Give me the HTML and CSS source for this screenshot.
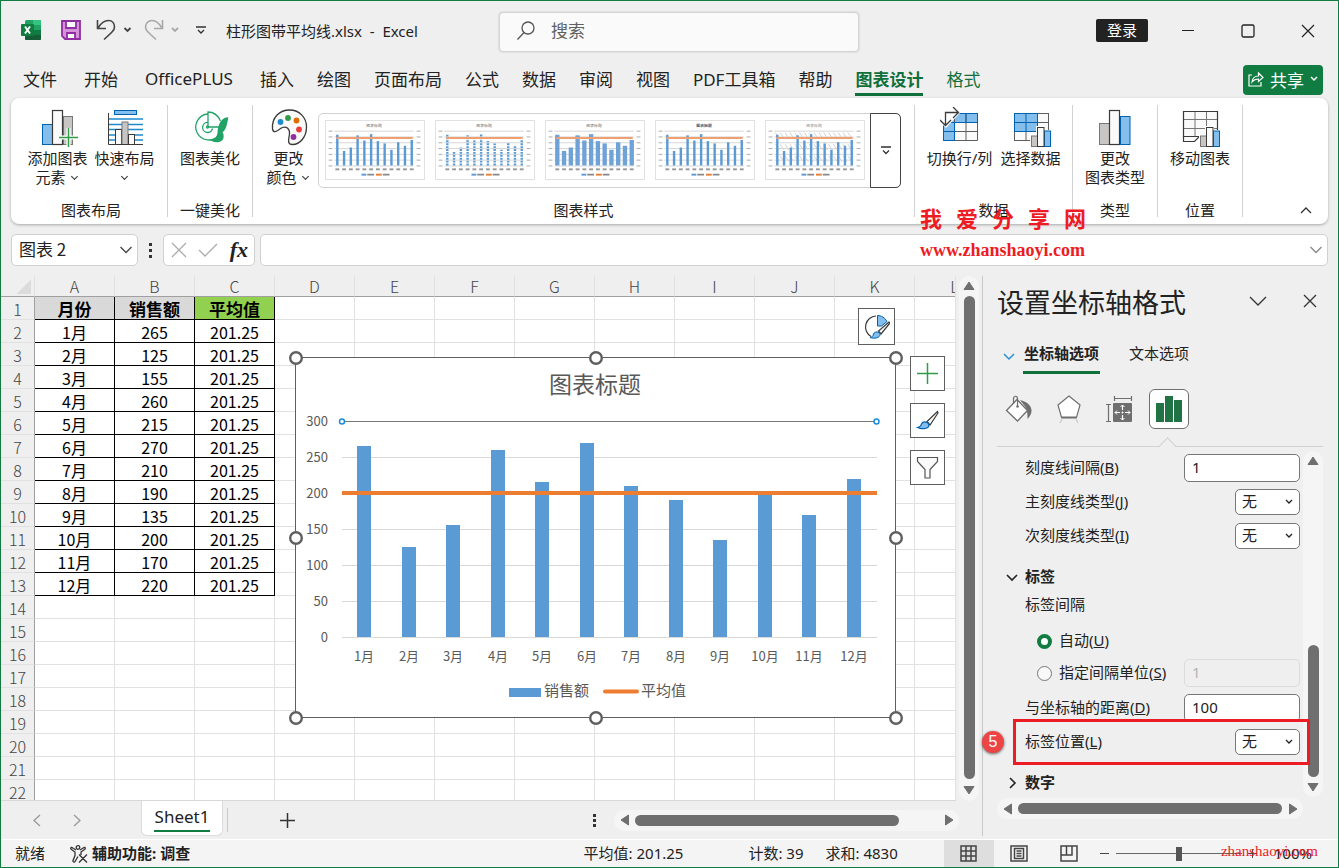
FILE: index.html
```html
<!DOCTYPE html>
<html lang="zh-CN">
<head>
  <meta charset="UTF-8">
  <meta name="viewport" content="width=device-width, initial-scale=1.0">
  <title>柱形图带平均线.xlsx - Excel</title>
  <link rel="stylesheet" href="styles.css">
</head>
<body>
  <div class="window">
    <!-- 标题栏 -->
    <header class="titlebar">
      <div class="title-left">
        <svg class="app-icon" width="20" height="20" viewBox="0 0 20 20">
          <rect x="4" y="0" width="16" height="20" rx="1.5" fill="#21a366"/>
          <rect x="12" y="0" width="8" height="5" fill="#33c481"/>
          <rect x="4" y="5" width="8" height="5" fill="#107c41"/>
          <path d="M4 10h16v9a1 1 0 0 1-1 1H5a1 1 0 0 1-1-1z" fill="#185c37"/>
          <rect x="12" y="10" width="8" height="5" fill="#107c41"/>
          <rect x="0" y="4" width="13" height="12" rx="1" fill="#107c41"/>
          <path d="M4 6.500l5 7M9 6.500l-5 7" stroke="#fff" stroke-width="1.900"/>
        </svg>
        <button class="quick" aria-label="保存">
          <svg width="20" height="20" viewBox="0 0 20 20" fill="#d592d9" stroke="#8f2ea0" stroke-width="1.800">
            <path d="M1 1h18v18H4l-3-3z"/>
            <path d="M5 1v7h10V1z" fill="#fafafa"/>
            <path d="M6 19v-6h8v6z" fill="#fafafa"/>
          </svg>
        </button>
        <button class="quick undo" aria-label="撤消">
          <svg width="36" height="22" viewBox="0 0 36 22" fill="none" stroke="#444" stroke-width="1.600">
            <path d="M1.500 1v8.500h8.500M2 9C5 4 9 1.500 12.500 1.500C16.500 1.500 18.500 4.500 18.500 8C18.500 11 16.500 13 8 20.500"/>
            <path d="M28.500 9l3 3 3-3" stroke-width="1.800"/>
          </svg>
        </button>
        <button class="quick" aria-label="恢复">
          <svg width="36" height="22" viewBox="0 0 36 22" fill="none" stroke="#a8a8a8" stroke-width="1.600">
            <path d="M18.500 1v8.500H10M18 9C15 4 11 1.500 8 1.500C4 1.500 1.500 4.500 1.500 8C1.500 11 3.500 13 12 20.500"/>
            <path d="M28 9l3 3 3-3" stroke-width="1.800"/>
          </svg>
        </button>
        <button class="quick more" aria-label="自定义快速访问工具栏">
          <svg width="10" height="8" viewBox="0 0 10 8" fill="none" stroke="#333" stroke-width="1.400">
            <path d="M0 1h10M2 4l3 3 3-3"/>
          </svg>
        </button>
        <span class="doc-name">柱形图带平均线.xlsx&nbsp; -&nbsp; Excel</span>
      </div>
      <label class="search">
        <svg width="18" height="19" viewBox="0 0 18 19" fill="none" stroke="#555" stroke-width="1.300">
          <circle cx="11" cy="7" r="6"/><path d="M7 11.500L.5 18.500"/>
        </svg>
        <input type="text" placeholder="搜索" aria-label="搜索">
      </label>
      <div class="title-right">
        <button class="login">登录</button>
        <button class="win-btn" aria-label="最小化"><svg width="14" height="14" viewBox="0 0 14 14"><path d="M1 6.500h12" stroke="#222"/></svg></button>
        <button class="win-btn" aria-label="最大化"><svg width="14" height="14" viewBox="0 0 14 14"><rect x="1" y="1" width="12" height="12" rx="1.500" fill="none" stroke="#222" stroke-width="1.300"/></svg></button>
        <button class="win-btn" aria-label="关闭"><svg width="14" height="14" viewBox="0 0 14 14"><path d="M1 1l12 12M13 1L1 13" stroke="#222" stroke-width="1.200"/></svg></button>
      </div>
    </header>

    <!-- 选项卡 -->
    <nav class="tabs">
      <button class="tab file">文件</button>
      <button class="tab">开始</button>
      <button class="tab plus">OfficePLUS</button>
      <button class="tab">插入</button>
      <button class="tab">绘图</button>
      <button class="tab">页面布局</button>
      <button class="tab">公式</button>
      <button class="tab">数据</button>
      <button class="tab">审阅</button>
      <button class="tab">视图</button>
      <button class="tab">PDF工具箱</button>
      <button class="tab">帮助</button>
      <button class="tab active">图表设计</button>
      <button class="tab context">格式</button>
      <button class="share">
        <svg width="16" height="16" viewBox="0 0 16 16" fill="none" stroke="#fff" stroke-width="1.200">
          <path d="M4 4H1v11h12v-4M4 11c.5-4 3-6 6.500-6V2l4.500 4.500-4.500 4V8C8 8 6 8.500 4 11z"/>
        </svg>
        共享
        <svg width="8" height="6" viewBox="0 0 8 6"><path d="M1 1l3 3 3-3" fill="none" stroke="#fff" stroke-width="1.500"/></svg>
      </button>
    </nav>

    <!-- 功能区 -->
    <section class="ribbon">
      <div class="group g-layout">
        <div class="group-body">
          <button class="big">
            <svg width="40" height="40" viewBox="0 0 40 40">
              <rect x="4.500" y="17.500" width="10" height="20" fill="#83beec" stroke="#0063b1"/>
              <rect x="25.500" y="9.500" width="9" height="28" fill="#c8c6c4" stroke="#797775"/>
              <rect x="14.500" y="3.500" width="10" height="34" fill="#fafafa" stroke="#3b3a39" stroke-width="1.200"/>
              <path d="M30.500 21v19M21 30.500h19" stroke="#fff" stroke-width="4"/>
              <path d="M30.500 21v19M21 30.500h19" stroke="#309b48" stroke-width="1.500"/>
            </svg>
            <span>添加图表<br>元素 <i class="caret"></i></span>
          </button>
          <button class="big">
            <svg width="40" height="40" viewBox="0 0 40 40">
              <rect x="9.500" y="3.500" width="22" height="4" fill="#83beec" stroke="#0063b1"/>
              <path d="M4 12h34M4 17.500h34M4 22.500h34M4 28h34M4 33h34" stroke="#1e8bcd" stroke-width="1.500"/>
              <rect x="10.500" y="22.500" width="6" height="15" fill="#fafafa" stroke="#3b3a39"/>
              <rect x="17" y="15" width="6" height="22.500" fill="#c8c6c4" stroke="#797775"/>
              <rect x="23.500" y="27.500" width="6" height="10" fill="#fafafa" stroke="#3b3a39"/>
              <path d="M3.500 6v31.500H38" fill="none" stroke="#3b3a39"/>
            </svg>
            <span>快速布局<br><i class="caret"></i></span>
          </button>
        </div>
        <div class="group-name">图表布局</div>
      </div>
      <div class="group g-small">
        <div class="group-body">
          <button class="big">
            <svg width="40" height="40" viewBox="0 0 40 40" fill="none" stroke="#21a366" stroke-width="1.300">
              <path d="M29 28A13 13 0 1 1 18 7"/>
              <path d="M22.500 21.500A5 5 0 1 1 18 15.500"/>
              <path d="M18 19.500V5c6 0 10 3.500 12.500 9M18 20h12"/>
              <circle cx="17.500" cy="20" r="1"/>
              <path d="M37.500 11C31 12 28.500 18 28 27c3-1 6-3 7-6 1.500-3 2-7 2.500-10zM28 27c-1 4-3.500 6-6 6.500 4 2 9 1.500 10.500-1.500 1-2.500.5-5-1-7z" fill="#21a366"/>
            </svg>
            <span>图表美化</span>
          </button>
        </div>
        <div class="group-name">一键美化</div>
      </div>
      <div class="group g-style">
        <div class="group-body">
          <button class="big">
            <svg width="40" height="40" viewBox="0 0 40 40">
              <path d="M3.500 22C2.500 10 11 3 20.500 3C31 3 37.500 11 37.500 20C37.500 30 31 37.500 23.500 37.500C17.500 37.500 20 31 20.500 27C21 22 17.500 19 13.500 20.500C9 22.500 5 28 3.500 22Z" fill="#fafafa" stroke="#3b3a39" stroke-width="1.300"/>
              <circle cx="11.500" cy="15" r="2.900" fill="#1e8bcd"/>
              <circle cx="19" cy="11" r="2.900" fill="#309b48"/>
              <circle cx="27.500" cy="13.500" r="2.900" fill="#de6c00"/>
              <circle cx="30" cy="22.500" r="2.900" fill="#ed3b3b"/>
              <circle cx="24.500" cy="30" r="2.900" fill="#8f2ea0"/>
            </svg>
            <span>更改<br>颜色 <i class="caret"></i></span>
          </button>
          <div class="gallery">
            <div class="thumbs" id="thumbs"></div>
            <button class="gallery-more" aria-label="其他样式">
              <svg width="10" height="9" viewBox="0 0 10 9" fill="none" stroke="#333" stroke-width="1.300"><path d="M0 1h10M2 4.500l3 3 3-3"/></svg>
            </button>
          </div>
        </div>
        <div class="group-name">图表样式</div>
      </div>
      <div class="group g-data">
        <div class="group-body">
          <button class="big">
            <svg width="40" height="40" viewBox="0 0 40 40">
              <rect x="3.500" y="6.500" width="34" height="27" fill="#fafafa"/>
              <path d="M3.500 6.500h34v9h-23v18h-11z" fill="#83beec"/>
              <path d="M3.500 6.500h34v27h-34zM3.500 15.500h34M3.500 24.500h34M14.500 6.500v27M26 6.500v27" fill="none" stroke="#605e5c"/>
              <path d="M3.500 33.500v-18h34v-9h-34M14.500 15.500v18h-11M3.500 24.500h11M26 6.500v9M37.500 6.500v9" fill="none" stroke="#0063b1"/>
              <path d="M0 0h20v6L6 21 0 15z" fill="#fff"/>
              <path d="M5.500 18V5.500H18M0 13l5.500 5.500L11 13M13 0l5.500 5.500L13 11" fill="none" stroke="#3b3a39" stroke-width="1.300"/>
            </svg>
            <span>切换行/列</span>
          </button>
          <button class="big">
            <svg width="40" height="40" viewBox="0 0 40 40">
              <rect x="3.500" y="6.500" width="34" height="27" fill="#fafafa" stroke="#605e5c"/>
              <rect x="3.500" y="6.500" width="23" height="18" fill="#83beec"/>
              <path d="M3.500 24.500h34M26.500 15.500h11M15 24.500v9" stroke="#605e5c"/>
              <path d="M3.500 6.500h23v18h-23zM3.500 15.500h23M15 6.500v18" fill="none" stroke="#0063b1"/>
              <path d="M19 40V27h6v-8h9v4h6v17z" fill="#fff"/>
              <rect x="20.500" y="29" width="6" height="10.500" fill="#c8c6c4" stroke="#797775"/>
              <rect x="33.500" y="24" width="6" height="15.500" fill="#83beec" stroke="#0063b1"/>
              <rect x="26.500" y="20.500" width="6.500" height="19" fill="#fafafa" stroke="#3b3a39"/>
            </svg>
            <span>选择数据</span>
          </button>
        </div>
        <div class="group-name">数据</div>
        <div class="stamp">
          <div class="stamp-name"><span>我</span><span>爱</span><span>分</span><span>享</span><span>网</span></div>
          <div class="stamp-url">www.zhanshaoyi.com</div>
        </div>
      </div>
      <div class="group g-small">
        <div class="group-body">
          <button class="big">
            <svg width="40" height="40" viewBox="0 0 40 40">
              <rect x="4.500" y="16.500" width="10" height="21" fill="#c8c6c4" stroke="#797775"/>
              <rect x="25.500" y="9.500" width="9.500" height="28" fill="#83beec" stroke="#0063b1"/>
              <rect x="14.500" y="3.500" width="10" height="34" fill="#fafafa" stroke="#3b3a39" stroke-width="1.200"/>
            </svg>
            <span>更改<br>图表类型</span>
          </button>
        </div>
        <div class="group-name">类型</div>
      </div>
      <div class="group g-small">
        <div class="group-body">
          <button class="big">
            <svg width="40" height="40" viewBox="0 0 40 40">
              <rect x="3.500" y="4.500" width="34" height="25" fill="#fafafa"/>
              <path d="M3.500 12.500h34M3.500 21.500h34M15 4.500v25M26.500 4.500v25" stroke="#797775"/>
              <path d="M3.500 4.500h34v25h-34z" fill="none" stroke="#3b3a39" stroke-width="1.200"/>
              <path d="M3.500 29.500v5h11l5-5z" fill="#fafafa" stroke="#3b3a39" stroke-width="1.200"/>
              <path d="M19 40V27h6v-8h9v4h6v17z" fill="#fff"/>
              <rect x="20.500" y="29" width="6" height="10.500" fill="#c8c6c4" stroke="#797775"/>
              <rect x="33.500" y="24" width="6" height="15.500" fill="#83beec" stroke="#0063b1"/>
              <rect x="26.500" y="20.500" width="6.500" height="19" fill="#fafafa" stroke="#3b3a39"/>
            </svg>
            <span>移动图表</span>
          </button>
        </div>
        <div class="group-name">位置</div>
      </div>
      <button class="collapse" aria-label="折叠功能区">
        <svg width="12" height="8" viewBox="0 0 12 8"><path d="M1 7l5-5 5 5" fill="none" stroke="#333" stroke-width="1.300"/></svg>
      </button>
    </section>

    <!-- 编辑栏 -->
    <section class="formula">
      <label class="name-box">
        <input type="text" value="图表 2" aria-label="名称框">
        <svg width="14" height="8" viewBox="0 0 14 8"><path d="M1.500 1l5.500 5.500L12.500 1" fill="none" stroke="#444" stroke-width="1.300"/></svg>
      </label>
      <span class="dots"><i></i><i></i><i></i></span>
      <div class="fx-box">
        <button aria-label="取消"><svg width="16" height="16" viewBox="0 0 16 16"><path d="M1 1l14 14M15 1L1 15" stroke="#aaa" stroke-width="1.300"/></svg></button>
        <button aria-label="输入"><svg width="20" height="16" viewBox="0 0 20 16"><path d="M1 8l6 6L19 2" fill="none" stroke="#aaa" stroke-width="1.300"/></svg></button>
        <button class="fx" aria-label="插入函数">fx</button>
      </div>
      <label class="formula-box">
        <input type="text" aria-label="编辑栏">
        <svg width="14" height="8" viewBox="0 0 14 8"><path d="M1.500 1l5.500 5.500L12.500 1" fill="none" stroke="#888" stroke-width="1.300"/></svg>
      </label>
    </section>

    <main class="main">
      <div class="book">
        <div class="sheet-area">
          <div class="sheet">
            <table class="grid" id="grid"></table>
            <svg class="chart" id="chart" width="616" height="376" viewBox="288 350 616 376"></svg>
            <button class="chart-tool float" aria-label="图表美化">
              <svg width="26" height="26" viewBox="0 0 26 26">
                <path d="M12 2A11 11 0 0 0 7 22.500" fill="none" stroke="#3b3a39" stroke-width="1.200"/>
                <path d="M13.500 1.500v10.500h4L23 7.500C21 4 17.500 1.500 13.500 1.500z" fill="#83beec" stroke="#0063b1"/>
                <path d="M25 8L14.500 17l2.500 3L26 9z" fill="#fafafa" stroke="#3b3a39" stroke-width="1.200"/>
                <path d="M6 23.500c2-.5 3-1 3.500-3.500 1-3 6-2.500 6.500.5 0 3.500-6 4.500-10 3z" fill="#83beec" stroke="#0063b1"/>
              </svg>
            </button>
            <div class="chart-tools">
              <button class="chart-tool" aria-label="图表元素"><svg width="23" height="23" viewBox="0 0 23 23"><path d="M11.500 1v21M1 11.500h21" stroke="#309b48" stroke-width="1.500"/></svg></button>
              <button class="chart-tool" aria-label="图表样式">
                <svg width="23" height="23" viewBox="0 0 23 23">
                  <path d="M21.500 2.500L11 12.500l3 3.500 8-12z" fill="#fafafa" stroke="#3b3a39" stroke-width="1.200"/>
                  <path d="M1.500 18.500c2.500-.5 3.500-1 4-3.500 1.500-3.500 7-2 7.500 1 0 4-7 4.500-11.500 2.500z" fill="#83beec" stroke="#0063b1" stroke-width="1.200"/>
                </svg>
              </button>
              <button class="chart-tool" aria-label="图表筛选器"><svg width="23" height="23" viewBox="0 0 23 23"><path d="M1.500 1.500h20v4l-7.500 8v8.500H9v-8.500l-7.500-8z" fill="#fafafa" stroke="#555" stroke-width="1.200"/></svg></button>
            </div>
          </div>
          <div class="vscroll">
            <button aria-label="向上"><svg width="12" height="10" viewBox="0 0 12 10"><path d="M6 1l5 7.500H1z" fill="#6f6f6f" stroke="#6f6f6f" stroke-linejoin="round"/></svg></button>
            <div class="thumb"></div>
            <button aria-label="向下"><svg width="12" height="10" viewBox="0 0 12 10"><path d="M6 9l5-7.500H1z" fill="#6f6f6f" stroke="#6f6f6f" stroke-linejoin="round"/></svg></button>
          </div>
        </div>
        <div class="sheet-bar">
          <button class="nav-btn" aria-label="上一张"><svg width="8" height="13" viewBox="0 0 8 13"><path d="M7 1L1 6.500 7 12" fill="none" stroke="#999" stroke-width="1.300"/></svg></button>
          <button class="nav-btn" aria-label="下一张"><svg width="8" height="13" viewBox="0 0 8 13"><path d="M1 1l6 5.500L1 12" fill="none" stroke="#999" stroke-width="1.300"/></svg></button>
          <button class="sheet-tab"><span>Sheet1</span></button>
          <i class="sep"></i>
          <button class="add" aria-label="新工作表"><svg width="15" height="15" viewBox="0 0 15 15"><path d="M7.500 0v15M0 7.500h15" stroke="#333" stroke-width="1.500"/></svg></button>
          <span class="dots"><i></i><i></i><i></i></span>
          <div class="hscroll">
            <button aria-label="向左"><svg width="10" height="12" viewBox="0 0 10 12"><path d="M1 6l7.500-5v10z" fill="#6f6f6f" stroke="#6f6f6f" stroke-linejoin="round"/></svg></button>
            <div class="track"><div class="thumb short"></div></div>
            <button aria-label="向右"><svg width="10" height="12" viewBox="0 0 10 12"><path d="M9 6L1.500 1v10z" fill="#6f6f6f" stroke="#6f6f6f" stroke-linejoin="round"/></svg></button>
          </div>
        </div>
      </div>

      <!-- 设置坐标轴格式 -->
      <aside class="pane">
        <div class="pane-head">
          <h1>设置坐标轴格式</h1>
          <button aria-label="任务窗格选项"><svg width="18" height="10" viewBox="0 0 18 10"><path d="M1 1l8 8 8-8" fill="none" stroke="#333" stroke-width="1.300"/></svg></button>
          <button aria-label="关闭窗格"><svg width="14" height="14" viewBox="0 0 14 14"><path d="M1 1l12 12M13 1L1 13" stroke="#333" stroke-width="1.300"/></svg></button>
        </div>
        <div class="pane-tabs">
          <svg width="12" height="8" viewBox="0 0 12 8"><path d="M1 1l5 5 5-5" fill="none" stroke="#2b8fd6" stroke-width="1.500"/></svg>
          <button class="pane-tab active">坐标轴选项</button>
          <button class="pane-tab">文本选项</button>
        </div>
        <div class="pane-icons">
          <button aria-label="填充与线条">
            <svg width="28" height="28" viewBox="0 0 28 28">
              <path d="M15 5c7 1.500 12 6 11.500 11 0 3-1.500 5-4 8 0-4 0-8-2-12z" fill="#6f6f6f"/>
              <path d="M12 4.500l10.500 11L12.500 26 1.500 15.500z" fill="#fff" stroke="#6f6f6f" stroke-width="1.300"/>
              <path d="M8.500 9V3.500c0-3 4-3 4 0V11" fill="none" stroke="#6f6f6f" stroke-width="1.200"/>
              <circle cx="12.500" cy="11.500" r="1.300" fill="#6f6f6f"/>
            </svg>
          </button>
          <button aria-label="效果">
            <svg width="28" height="28" viewBox="0 0 28 28">
              <path d="M14 1l11 9-3.500 12.500h-15L3 10z" fill="#fff" stroke="#6f6f6f" stroke-width="1.200"/>
              <path d="M6.500 22.500h15" stroke="#6f6f6f" stroke-width="2"/>
              <path d="M7 24l-2 4M21 24l2 4" stroke="#c8c8c8" stroke-width="1.200"/>
            </svg>
          </button>
          <button aria-label="大小与属性">
            <svg width="28" height="28" viewBox="0 0 28 28">
              <rect x="8" y="8" width="19" height="19" rx="1" fill="#6f6f6f"/>
              <path d="M9.500 3.500h17M9.500 1v5M26.500 1v5M3.500 9.500v17M1 9.500h5M1 26.500h5" stroke="#6f6f6f" stroke-width="1.200"/>
              <path d="M17.500 10v5M17.500 20v5M10 17.500h5M20 17.500h5" stroke="#fff" stroke-width="1.200"/>
              <path d="M15.500 12l2-2 2 2M15.500 23l2 2 2-2M12 15.500l-2 2 2 2M23 15.500l2 2-2 2M17.500 16.500v2M16.500 17.500h2" fill="none" stroke="#fff"/>
            </svg>
          </button>
          <button class="active" aria-label="坐标轴选项">
            <svg width="28" height="28" viewBox="0 0 28 28" fill="#217346"><path d="M1 8h8v19H1zM10 1h8v26h-8zM19 5h8v22h-8z"/></svg>
          </button>
        </div>
        <div class="pane-line"></div>
        <div class="pane-body">
          <form class="form">
            <div class="row"><label for="tickGap">刻度线间隔(<u>B</u>)</label><input type="text" id="tickGap" value="1"></div>
            <div class="row"><label for="majorType">主刻度线类型(<u>J</u>)</label><select id="majorType"><option>无</option></select></div>
            <div class="row"><label for="minorType">次刻度线类型(<u>I</u>)</label><select id="minorType"><option>无</option></select></div>
            <h2 class="section">
              <svg width="14" height="14" viewBox="0 0 14 14"><path d="M2 5l5 5 5-5" fill="none" stroke="#222" stroke-width="1.600"/></svg><span>标签</span>
            </h2>
            <div class="row caption"><span>标签间隔</span></div>
            <div class="row option first"><input type="radio" name="gap" id="gapAuto" checked><label for="gapAuto">自动(<u>U</u>)</label></div>
            <div class="row option"><input type="radio" name="gap" id="gapUnit"><label for="gapUnit">指定间隔单位(<u>S</u>)</label><input type="text" value="1" aria-label="间隔单位" disabled></div>
            <div class="row"><label for="distance">与坐标轴的距离(<u>D</u>)</label><input type="text" id="distance" value="100"></div>
            <div class="row marked"><label for="labelPos">标签位置(<u>L</u>)</label><select id="labelPos"><option>无</option></select><i class="step">5</i></div>
            <h2 class="section">
              <svg width="14" height="14" viewBox="0 0 14 14"><path d="M5 2l5 5-5 5" fill="none" stroke="#222" stroke-width="1.600"/></svg><span>数字</span>
            </h2>
          </form>
          <div class="vscroll">
            <button aria-label="向上"><svg width="12" height="10" viewBox="0 0 12 10"><path d="M6 1l5 7.500H1z" fill="#6f6f6f" stroke="#6f6f6f" stroke-linejoin="round"/></svg></button>
            <div class="track"><div class="thumb"></div></div>
            <button aria-label="向下"><svg width="12" height="10" viewBox="0 0 12 10"><path d="M6 9l5-7.500H1z" fill="#6f6f6f" stroke="#6f6f6f" stroke-linejoin="round"/></svg></button>
          </div>
        </div>
        <div class="hscroll">
          <button aria-label="向左"><svg width="10" height="12" viewBox="0 0 10 12"><path d="M1 6l7.500-5v10z" fill="#6f6f6f" stroke="#6f6f6f" stroke-linejoin="round"/></svg></button>
          <div class="track"><div class="thumb"></div></div>
          <button aria-label="向右"><svg width="10" height="12" viewBox="0 0 10 12"><path d="M9 6L1.500 1v10z" fill="#6f6f6f" stroke="#6f6f6f" stroke-linejoin="round"/></svg></button>
        </div>
      </aside>
    </main>

    <!-- 状态栏 -->
    <footer class="status">
      <span class="ready">就绪</span>
      <svg width="18" height="18" viewBox="0 0 18 18" fill="none" stroke="#333" stroke-width="1.300">
        <circle cx="8" cy="2.500" r="1.800"/>
        <path d="M6 5L2 2.500C1 2 0 3.500 1.500 4.500L5 7v3.500L3 15.500c-.5 1.500 1.500 2 2 1L8 11.500M10 5l4-2.500c1-.5 2 1 .5 2L11 7v3M9 9.500l8 8M17 9.500l-8 8"/>
      </svg>
      <b class="access">辅助功能: 调查</b>
      <span class="avg">平均值: 201.25</span>
      <span class="count">计数: 39</span>
      <span class="sum">求和: 4830</span>
      <button class="view active" aria-label="普通"><svg width="17" height="17" viewBox="0 0 17 17" fill="none" stroke="#444" stroke-width="1.500"><path d="M1 1h15v15H1zM1 6h15M1 11h15M6 1v15M11 1v15"/></svg></button>
      <button class="view" aria-label="页面布局"><svg width="18" height="17" viewBox="0 0 18 17" fill="none" stroke="#444" stroke-width="1.500"><path d="M1 1h16v15H1zM4.500 3.500h9v10h-9zM6.500 6h5M6.500 8.500h5M6.500 11h5"/></svg></button>
      <button class="view" aria-label="分页预览"><svg width="18" height="17" viewBox="0 0 18 17" fill="none" stroke="#444" stroke-width="1.500"><path d="M1 1h16v15H1zM1 10h11V1M6.500 1v9"/></svg></button>
      <button class="zoom-btn" aria-label="缩小"><svg width="11" height="11" viewBox="0 0 11 11"><path d="M1 5.500h9" stroke="#444"/></svg></button>
      <input class="zoom" type="range" min="0" max="100" value="50" aria-label="缩放">
      <button class="zoom-btn" aria-label="放大"><svg width="11" height="11" viewBox="0 0 11 11"><path d="M1 5.500h9M5.500 1v9" stroke="#444"/></svg></button>
      <span class="percent">100%<span class="site">zhanshaoyi.com</span></span>
    </footer>
  </div>
  <script src="script.js"></script>
</body>
</html>
```
FILE: styles.css
```css
* {
  box-sizing: border-box;
}
body {
  margin: 0;
  font-family: "Noto Sans", "Noto Sans CJK SC", sans-serif;
  font-size: 15px;
  color: #222;
}
button, input, select {
  font: inherit;
  color: inherit;
}
button {
  display: flex;
  align-items: center;
  justify-content: center;
  padding: 0;
  border: none;
  background: none;
  white-space: nowrap;
}
input {
  min-width: 0;
  outline: none;
}
svg {
  flex: none;
}
.window {
  display: flex;
  flex-direction: column;
  height: 100vh;
  border: 1px solid #107c41;
  background: #efefef;
  overflow: hidden;
}

/* 标题栏 */
.titlebar {
  display: grid;
  grid-template-columns: 498px minmax(200px, 360px) 1fr;
  align-items: center;
  height: 61px;
  flex: none;
}
.title-left {
  display: flex;
  align-items: center;
  padding: 0 0 3px 20px;
}
.quick {
  margin-left: 20px;
}
.quick + .quick {
  margin-left: 12px;
}
.quick.undo {
  margin-left: 15px;
}
.quick.more {
  margin-left: 16px;
}
.doc-name {
  margin-left: 20px;
}
.search {
  display: flex;
  align-items: center;
  height: 40px;
  padding: 0 17px 2px;
  gap: 14px;
  border: 1px solid #d4d4d4;
  border-radius: 4px;
  background: #fafafa;
  box-shadow: 0 0 2px rgba(0, 0, 0, 0.2);
}
.search input {
  flex: 1;
  padding: 0 2px;
  border: none;
  background: none;
  font-size: 17px;
}
.search input::placeholder {
  color: #616161;
}
.title-right {
  display: flex;
  align-items: center;
  justify-content: flex-end;
  padding-bottom: 2px;
}
.login {
  width: 52px;
  height: 23px;
  margin-right: 10px;
  padding-bottom: 2px;
  border-radius: 2px;
  background: #222;
  color: #fff;
}
.win-btn {
  width: 60px;
  height: 40px;
}

/* 选项卡 */
.tabs {
  display: flex;
  gap: 23px;
  height: 36px;
  flex: none;
  padding: 0 15px 0 22px;
  font-size: 17px;
}
.tab {
  height: 34px;
  border-bottom: 3px solid transparent;
  border-top: 2px solid transparent;
}
.tab.file {
  padding-right: 4px;
}
.tab.plus {
  padding: 0 4px;
}
.tab.active {
  color: #0f703b;
  font-weight: bold;
  border-bottom-color: #0f703b;
}
.tab.context {
  color: #0f703b;
}
.share {
  gap: 6px;
  height: 30px;
  width: 80px;
  margin: 3px 0 0 auto;
  padding-bottom: 2px;
  border-radius: 4px;
  background: #107c41;
  color: #fff;
}

/* 功能区 */
.ribbon {
  display: flex;
  height: 126px;
  flex: none;
  margin: 0 10px;
  padding: 7px 0;
  border-radius: 8px;
  background: #fff;
  box-shadow: 0 1px 3px rgba(0, 0, 0, 0.3);
}
.group {
  position: relative;
  display: flex;
  flex-direction: column;
  justify-content: space-between;
  border-right: 1px solid #d1d1d1;
}
.group-body {
  display: flex;
  justify-content: center;
}
.group-name {
  line-height: 14px;
  text-align: center;
}
.g-layout {
  width: 157px;
  padding-left: 4px;
}
.g-small {
  width: 85px;
}
.g-style {
  flex: 0 1 662px;
}
.g-data {
  width: 158px;
}
.big {
  flex-direction: column;
  justify-content: flex-start;
  gap: 2px;
  min-width: 67px;
  padding-top: 2px;
  line-height: 19px;
}
.g-data .big {
  min-width: 71px;
}
.g-data .group-body {
  padding-left: 3px;
}
.g-style .group-body {
  justify-content: flex-start;
  padding-left: 2px;
}
.caret {
  display: inline-block;
  width: 5px;
  height: 5px;
  margin: 0 2px 4px 3px;
  border-right: 1px solid #333;
  border-bottom: 1px solid #333;
  transform: rotate(45deg);
}
.gallery {
  display: flex;
  height: 75px;
  margin: 8px 13px 0 -4px;
  border: 1px solid #d1d1d1;
  border-radius: 5px;
}
.thumbs {
  display: flex;
  gap: 10px;
  padding: 6px;
}
.thumbs svg {
  border: 1px solid #e1e1e1;
}
.gallery-more {
  width: 31px;
  margin: -1px;
  border: 1px solid #444;
  border-radius: 0 5px 5px 0;
}
.collapse {
  margin: auto 12px 0 auto;
  width: 20px;
  height: 14px;
}
.stamp {
  position: absolute;
  left: 5px;
  top: 103px;
  z-index: 2;
  color: #ed1c24;
  font-weight: bold;
}
.stamp-name {
  display: flex;
  gap: 14px;
  font-size: 22px;
  line-height: 20px;
}
.stamp-url {
  margin-top: 12px;
  font-family: "Liberation Serif", serif;
  font-size: 18px;
  line-height: 20px;
}

/* 编辑栏 */
.formula {
  display: flex;
  align-items: center;
  height: 32px;
  flex: none;
  margin: 10px;
}
.name-box, .fx-box, .formula-box {
  display: flex;
  align-items: center;
  height: 32px;
  border: 1px solid #d1d1d1;
  border-radius: 5px;
  background: #fff;
}
.name-box {
  width: 127px;
  padding: 0 4px 0 7px;
  font-family: "Noto Sans CJK SC", sans-serif;
  font-size: 17px;
}
.name-box input, .formula-box input {
  flex: 1;
  width: 0;
  padding: 0 0 3px;
  border: none;
  background: none;
}
.dots {
  display: flex;
  flex-direction: column;
  gap: 3px;
}
.dots i {
  width: 3px;
  height: 3px;
  background: #333;
}
.formula .dots {
  margin: 0 11px;
}
.fx-box {
  width: 92px;
  justify-content: space-between;
  padding: 0 6px 0 7px;
  margin-right: 5px;
}
.fx {
  font-family: "Liberation Serif", serif;
  font-style: italic;
  font-weight: bold;
  font-size: 22px;
}
.formula-box {
  flex: 1;
  padding: 0 4px;
}

/* 工作表 */
.main {
  display: flex;
  flex: 1;
  min-height: 0;
}
.book {
  display: flex;
  flex-direction: column;
  flex: 1;
  min-width: 0;
}
.sheet-area {
  display: flex;
  flex: 1;
  min-height: 0;
}
.sheet {
  position: relative;
  flex: 1;
  overflow: hidden;
  border-right: 1px solid #e1e1e1;
  border-bottom: 1px solid #d8d8d8;
}
.grid {
  width: 994px;
  table-layout: fixed;
  border-collapse: separate;
  border-spacing: 0;
  background: #fff;
  font-family: "Noto Sans CJK SC", sans-serif;
  font-size: 16px;
  color: #000;
}
.grid th, .grid td {
  height: 23px;
  padding: 1px 0 0;
  border-right: 1px solid #e1e1e1;
  border-bottom: 1px solid #e1e1e1;
  text-align: center;
  line-height: 20px;
}
.grid thead th {
  height: 21px;
  padding: 0;
  background: #efefef;
  border-bottom-color: #a0a0a0;
  color: #444;
  font-weight: 300;
}
.grid tbody th {
  background: #efefef;
  border-right-color: #a0a0a0;
  color: #444;
  font-weight: 300;
}
.grid thead .corner {
  width: 34px;
  background: #efefef linear-gradient(135deg, #efefef 50%, #dcdcdc 50%) no-repeat 15px 3px / 15px 15px;
}
.grid td.filled {
  border-color: #000;
}
.grid td.name {
  background: #d9d9d9;
  font-size: 17px;
  font-weight: bold;
}
.grid td.name.green {
  background: #92d050;
}
.chart {
  position: absolute;
  left: 287px;
  top: 74px;
  font-family: "Noto Sans CJK SC", sans-serif;
  font-size: 13px;
}
.chart-tools {
  position: absolute;
  left: 909px;
  top: 80px;
  display: flex;
  flex-direction: column;
  gap: 12px;
}
.chart-tool {
  width: 35px;
  height: 35px;
  border: 1px solid #5f5f5f;
  background: #fff;
}
.chart-tool.float {
  position: absolute;
  left: 857px;
  top: 32px;
  width: 37px;
  height: 37px;
}

/* 滚动条 */
.vscroll, .hscroll {
  display: flex;
  align-items: center;
  border-radius: 10px;
  background: #f5f5f5;
}
.vscroll {
  flex-direction: column;
  width: 20px;
}
.sheet-area .vscroll {
  margin: 0 3px;
}
.vscroll button {
  width: 20px;
  height: 20px;
}
.sheet-area .vscroll button:last-child {
  height: 22px;
}
.hscroll {
  height: 21px;
}
.hscroll button {
  width: 21px;
  height: 21px;
}
.thumb {
  flex: 1;
  border-radius: 6px;
  background: #6f6f6f;
}
.vscroll .thumb {
  width: 11px;
}
.hscroll .thumb {
  height: 11px;
}
.track {
  display: flex;
  flex: 1;
}
.vscroll .track {
  align-items: flex-end;
}
.vscroll .track .thumb {
  height: 43%;
}
.hscroll .thumb.short {
  flex: 0 0 87%;
}

/* 工作表标签 */
.sheet-bar {
  display: flex;
  align-items: center;
  height: 38px;
  flex: none;
  padding-left: 16px;
}
.nav-btn {
  width: 40px;
  height: 30px;
}
.sheet-tab {
  width: 82px;
  height: 36px;
  margin: 0 4px 4px 44px;
  border: 1px solid #dcdcdc;
  border-top: none;
  border-radius: 0 0 6px 6px;
  background: #fff;
  font-size: 17px;
}
.sheet-tab span {
  padding: 0 1px;
  line-height: 26px;
  border-bottom: 2px solid #107c41;
}
.sep {
  width: 1px;
  height: 24px;
  background: #c8c8c8;
}
.add {
  width: 38px;
  height: 30px;
  margin-left: 40px;
}
.sheet-bar .dots {
  margin: 0 18px 0 auto;
  gap: 2px;
}
.sheet-bar .hscroll {
  width: 345px;
  margin-right: 23px;
}

/* 任务窗格 */
.pane {
  display: flex;
  flex-direction: column;
  flex: none;
  width: 356px;
  padding: 9px 15px 0 14px;
  margin-bottom: 3px;
  border-left: 1px solid #c8c8c8;
}
.pane-head {
  display: flex;
  gap: 32px;
  height: 36px;
  padding-right: 3px;
}
.pane-head h1 {
  flex: 1;
  margin: 0;
  font-size: 27px;
  font-weight: 400;
  line-height: 36px;
  white-space: nowrap;
}
.pane-head button {
  width: 20px;
  height: 32px;
}
.pane-tabs {
  display: flex;
  align-items: center;
  height: 34px;
  margin-top: 19px;
  padding-left: 6px;
}
.pane-tab {
  height: 34px;
  margin-left: 28px;
  padding: 0 1px 10px;
}
.pane-tab.active {
  margin-left: 8px;
  padding-bottom: 7px;
  border-bottom: 3px solid #0f703b;
  font-weight: bold;
}
.pane-icons {
  display: flex;
  gap: 10px;
  margin-top: 15px;
  padding-left: 2px;
}
.pane-icons button {
  width: 40px;
  height: 40px;
}
.pane-icons .active {
  border: 1px solid #6f6f6f;
  border-radius: 6px;
  background: #fff;
}
.pane-line {
  position: relative;
  height: 1px;
  margin-top: 17px;
  background: #d1d1d1;
}
.pane-line::after {
  content: "";
  position: absolute;
  left: 164px;
  top: -6px;
  width: 12px;
  height: 12px;
  border: 1px solid #d1d1d1;
  border-right: none;
  border-bottom: none;
  background: linear-gradient(135deg, #efefef 55%, transparent 55%);
  transform: rotate(45deg);
}
.pane-body {
  display: flex;
  margin-top: 4px;
}
.pane-body .vscroll {
  height: 346px;
}
.form {
  flex: 1;
  padding-right: 3px;
}
.row {
  display: flex;
  align-items: center;
  justify-content: space-between;
  height: 34px;
  padding-left: 28px;
}
.row label, .row > span, .section span {
  padding-bottom: 3px;
}
.row input[type="text"] {
  width: 116px;
  height: 28px;
  padding: 0 7px 2px;
  border: 1px solid #777;
  border-radius: 5px;
  background: #fff;
}
.row input[type="text"]:disabled {
  border-color: #dcdcdc;
  background: none;
  color: #b5b5b5;
}
.row select {
  appearance: none;
  width: 65px;
  height: 26px;
  padding: 0 6px 2px;
  border: 1px solid #777;
  border-radius: 5px;
  background: #fff url("data:image/svg+xml,%3Csvg xmlns='http://www.w3.org/2000/svg' width='8' height='6'%3E%3Cpath d='M1 1l3 3 3-3' fill='none' stroke='%23222' stroke-width='1.300'/%3E%3C/svg%3E") no-repeat right 6px center;
}
.section {
  display: flex;
  align-items: center;
  gap: 6px;
  height: 32px;
  margin: 8px 0 0;
  padding-left: 8px;
  font-size: 15px;
  font-weight: bold;
}
.row.caption {
  height: 24px;
}
.row.option {
  height: 32px;
  padding-left: 40px;
  justify-content: flex-start;
  gap: 7px;
}
.row.option.first {
  margin-top: 8px;
}
.row.option input[type="text"] {
  margin-left: auto;
}
.row.option + .row:not(.option) {
  margin-top: 2px;
}
.row input[type="radio"] {
  appearance: none;
  width: 15px;
  height: 15px;
  margin: 0;
  border: 1px solid #777;
  border-radius: 50%;
  background: #f8f8f8;
}
.row input[type="radio"]:checked {
  border: 4px solid #107c41;
  background: #fff;
}
.row.marked {
  position: relative;
}
.row.marked::after {
  content: "";
  position: absolute;
  inset: -6px -10px -6px 16px;
  border: 3px solid #ed1c24;
  pointer-events: none;
  z-index: 1;
}
.step {
  position: absolute;
  left: -15px;
  top: 6px;
  width: 22px;
  height: 22px;
  border-radius: 50%;
  background: #ec4545;
  box-shadow: 0 1px 3px rgba(0, 0, 0, 0.6);
  color: #fff;
  font-family: "Liberation Sans", sans-serif;
  font-size: 16px;
  font-style: normal;
  line-height: 22px;
  text-align: center;
}
.pane > .hscroll {
  flex: none;
  margin: -1px 20px 0 0;
}

/* 状态栏 */
.status {
  display: flex;
  align-items: center;
  height: 28px;
  flex: none;
  padding: 0 26px 0 14px;
  border-top: 1px solid #fff;
  background: #f4f4f4;
  white-space: nowrap;
}
.status span, .status b {
  padding-bottom: 2px;
}
.ready {
  margin-right: 25px;
}
.access {
  margin: 0 auto 0 4px;
}
.avg {
  margin-right: 65px;
}
.count {
  margin-right: 22px;
}
.sum {
  margin-right: 46px;
}
.view {
  width: 50px;
  height: 27px;
}
.view.active {
  background: #dedede;
}
.zoom-btn {
  width: 22px;
  height: 27px;
}
.zoom {
  appearance: none;
  width: 126px;
  height: 14px;
  margin: 0;
  background: linear-gradient(#666, #666) center / 100% 1px no-repeat;
}
.zoom::-webkit-slider-thumb {
  appearance: none;
  width: 6px;
  height: 14px;
  background: #555;
}
.percent {
  position: relative;
  margin-left: 10px;
}
.site {
  position: absolute;
  right: -6px;
  top: 0;
  color: #ed1c24;
  font-family: "Liberation Serif", serif;
  font-size: 15px;
}
```
FILE: script.js
```javascript
const sales = [265, 125, 155, 260, 215, 270, 210, 190, 135, 200, 170, 220];
const average = 201.25;

// 工作表
function drawGrid() {
  const cols = 'ABCDEFGHIJKL'.split('');
  const heads = ['月份', '销售额', '平均值'];
  let html = '<thead><tr><th class="corner"></th>' + cols.map(c => `<th>${c}</th>`).join('') + '</tr></thead><tbody>';
  for (let r = 1; r <= 22; r++) {
    html += `<tr><th>${r}</th>`;
    cols.forEach((c, i) => {
      if (i > 2 || r > 13) {
        html += '<td></td>';
      } else if (r === 1) {
        html += `<td class="filled name${i === 2 ? ' green' : ''}">${heads[i]}</td>`;
      } else {
        html += `<td class="filled">${[`${r - 1}月`, sales[r - 2], average][i]}</td>`;
      }
    });
    html += '</tr>';
  }
  document.getElementById('grid').innerHTML = html + '</tbody>';
}

// 图表
function drawChart() {
  let s = '<rect x="295.5" y="357.5" width="600" height="360" fill="#fff" stroke="#5f5f5f"/>';
  s += '<text x="595" y="393" font-size="23" text-anchor="middle" fill="#595959">图表标题</text>';
  for (let v = 0; v <= 300; v += 50) {
    const y = Math.round(637 - v * 0.72) + 0.5;
    s += `<path d="M342 ${y}H877" stroke="${v === 300 ? '#777' : '#d9d9d9'}"/>`;
    s += `<text x="328" y="${y + 4}" text-anchor="end" fill="#595959">${v}</text>`;
  }
  sales.forEach((v, i) => {
    const x = Math.round(357 + i * 44.5);
    const h = Math.round(v * 0.72);
    s += `<rect x="${x}" y="${637 - h}" width="14" height="${h}" fill="#5b9bd5"/>`;
    s += `<text x="${x + 7}" y="661" text-anchor="middle" fill="#595959">${i + 1}月</text>`;
  });
  s += '<path d="M342 493H877" stroke="#ed7d31" stroke-width="4"/>';
  s += '<circle cx="342" cy="421.5" r="2.5" fill="#fff" stroke="#1e8bdc" stroke-width="1.5"/>';
  s += '<circle cx="876.5" cy="421.5" r="2.5" fill="#fff" stroke="#1e8bdc" stroke-width="1.5"/>';
  s += '<rect x="509" y="688" width="32" height="9" fill="#5b9bd5"/><text x="544" y="696" font-size="15" fill="#595959">销售额</text>';
  s += '<path d="M605 691.5H637" stroke="#ed7d31" stroke-width="4" stroke-linecap="round"/><text x="641" y="696" font-size="15" fill="#595959">平均值</text>';
  for (const x of [296, 596, 896]) {
    for (const y of [358, 538, 718]) {
      if (x === 596 && y === 538) continue;
      s += `<circle cx="${x}" cy="${y}" r="5.8" fill="#fff" stroke="#5f5f5f" stroke-width="2.4"/>`;
    }
  }
  document.getElementById('chart').innerHTML = s;
}

// 图表样式缩略图
function drawThumbs() {
  const styles = [
    { width: 2.5, color: '#5b9bd5', title: '#666' },
    { width: 2.5, color: '#5b9bd5', title: '#666', dash: '2 1' },
    { width: 4.5, color: '#6fa3d8', title: '#666' },
    { width: 2.5, color: '#5b9bd5', title: '#44546a', bold: true },
    { width: 2.5, color: '#5b9bd5', title: '#888', hatch: true }
  ];
  document.getElementById('thumbs').innerHTML = styles.map(t => {
    let s = '<rect width="100" height="60" fill="#fff"/>';
    s += `<text x="49" y="6" font-size="4" text-anchor="middle" fill="${t.title}"${t.bold ? ' font-weight="bold"' : ''}>图表标题</text>`;
    if (t.hatch) {
      for (let x = 9; x < 88; x += 5) {
        s += `<path d="M${x} 12l4 6M${x} 24l4 6M${x} 36l4 6" stroke="#d0d0d0"/>`;
      }
    }
    for (let i = 0; i < 7; i++) {
      const y = 10.5 + i * 6;
      s += `<path d="M8 ${y}H90" stroke="#d4d4d4"/><path d="M2 ${y}h4M93 ${y}h4" stroke="#aaa"/>`;
    }
    sales.forEach((v, i) => {
      const x = 11 + i * 7;
      s += `<path d="M${x} 46V${46 - v * 0.12}" stroke="${t.color}" stroke-width="${t.width}"${t.dash ? ` stroke-dasharray="${t.dash}"` : ''}/>`;
      s += `<path d="M${x - 2} 50h4" stroke="#999" stroke-width="2"/>`;
    });
    s += '<path d="M10 17.500H89" stroke="#f0a070" stroke-width="2"/>';
    s += '<path d="M36 55.500h5" stroke="#5b9bd5" stroke-width="2"/><path d="M42 55.500h7M58 55.500h7" stroke="#888" stroke-width="2"/><path d="M51 55.500h6" stroke="#ed7d31" stroke-width="2"/>';
    return `<svg width="100" height="60" viewBox="0 0 100 60">${s}</svg>`;
  }).join('');
}

drawGrid();
drawChart();
drawThumbs();
```
